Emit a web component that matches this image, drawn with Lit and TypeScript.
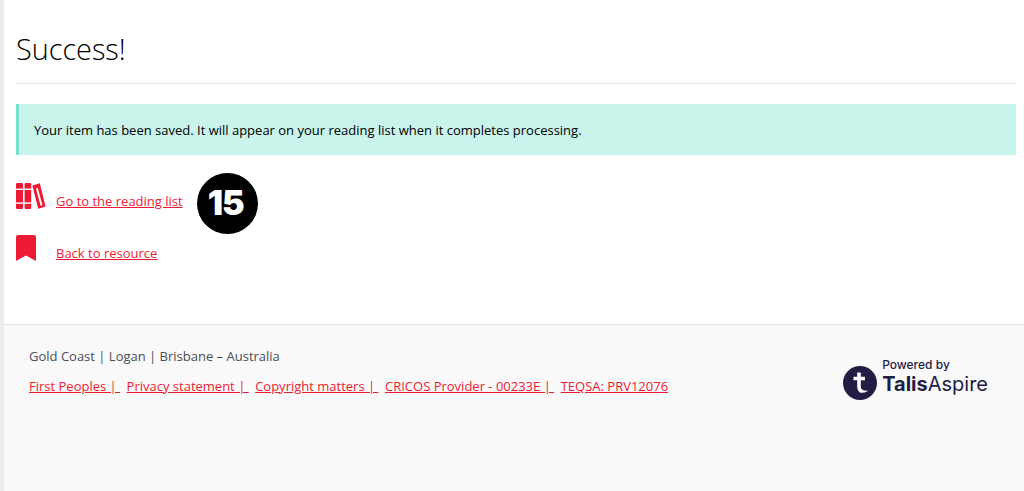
import { LitElement, html, css } from "lit";
import { customElement } from "lit/decorators.js";

@customElement("app-root")
export class AppRoot extends LitElement {
  static styles = css`
    :host {
      display: flex;
      flex-direction: column;
      height: 491px;
      width: 1024px;
      box-sizing: border-box;
      border-left: 4px solid #ececec;
      overflow: hidden;
      font-family: "Open Sans", sans-serif;
      font-size: 13px;
      color: #000;
      background: #fff;
    }
    main {
      height: 324px;
      box-sizing: border-box;
      padding: 0 8px 0 12px;
      flex: none;
    }
    h1 {
      margin: 0;
      padding-top: 30px;
      height: 53px;
      border-bottom: 1px solid #e5e5e5;
      font-size: 28.8px;
      line-height: 38px;
      font-weight: 300;
      color: #000;
    }
    .alert {
      margin-top: 20px;
      height: 51px;
      box-sizing: border-box;
      background: #c9f4eb;
      border-left: 3px solid #74e0cb;
      padding-left: 15px;
      display: flex;
      align-items: center;
      color: #000;
    }
    .row {
      display: flex;
      align-items: flex-start;
    }
    .first {
      margin-top: 18px;
      height: 61px;
    }
    .first svg {
      margin-top: 10px;
      flex: none;
    }
    .first a {
      margin-top: 19px;
      margin-left: 10px;
      line-height: 18px;
    }
    .badge {
      margin-left: 14px;
      width: 61px;
      height: 61px;
      box-sizing: border-box;
      padding: 0 3px 3px 0;
      border-radius: 50%;
      background: #000;
      color: #fff;
      display: flex;
      align-items: center;
      justify-content: center;
      font-family: Inter, sans-serif;
      font-weight: 900;
      font-size: 34px;
      letter-spacing: -1px;
    }
    .second svg {
      margin-top: 1px;
      flex: none;
    }
    .second a {
      margin-top: 10px;
      margin-left: 20px;
      line-height: 18px;
    }
    a {
      color: #ec1b33;
      text-decoration: underline;
    }
    footer {
      flex: 1;
      background: #f9f9f9;
      border-top: 1px solid #e3e3e3;
      padding: 22px 36px 0 25px;
      display: flex;
      justify-content: space-between;
      align-items: flex-start;
    }
    .place {
      color: #4a4f57;
      line-height: 18px;
    }
    .links {
      margin-top: 12px;
      display: flex;
      gap: 6.5px;
      line-height: 18px;
    }
    .links a {
      white-space: pre;
    }
    .logo {
      display: flex;
      align-items: flex-start;
      gap: 5px;
      margin-top: 11px;
      color: #211d44;
    }
    .logo svg {
      margin-top: 8px;
      flex: none;
    }
    .brand {
      display: flex;
      flex-direction: column;
    }
    .powered {
      font-family: Inter, sans-serif;
      font-size: 12px;
      font-weight: 500;
      line-height: 14px;
    }
    .name {
      font-family: Inter, sans-serif;
      font-size: 20px;
      line-height: 24px;
      font-weight: 400;
    }
    .name b {
      font-weight: 700;
    }
  `;

  render() {
    return html`
      <main>
        <h1>Success!</h1>
        <div class="alert">Your item has been saved. It will appear on your reading list when it completes processing.</div>
        <div class="row first">
          <svg width="30" height="27" viewBox="0 0 30 27" fill="#ec1b33">
            <rect x="0" y="0" width="7" height="26" rx="1.2" />
            <rect x="8.6" y="0" width="6.6" height="26" rx="1.2" />
            <rect x="0" y="5.6" width="16" height="1.4" fill="#fff" />
            <rect x="0" y="19.4" width="16" height="1.4" fill="#fff" />
            <path fill-rule="evenodd" d="M16.4 2.6 23.8 0.2 29.6 23.4 22.2 25.8ZM20 5.4 24.6 22.8 26.4 22.2 21.8 4.8Z" />
          </svg>
          <a href="#">Go to the reading list</a>
          <div class="badge">15</div>
        </div>
        <div class="row second">
          <svg width="20" height="26" viewBox="0 0 20 26" fill="#ec1b33">
            <path d="M2 0H18A2 2 0 0 1 20 2V26L10 20.5 0 26V2A2 2 0 0 1 2 0Z" />
          </svg>
          <a href="#">Back to resource</a>
        </div>
      </main>
      <footer>
        <div>
          <div class="place">Gold Coast | Logan | Brisbane – Australia</div>
          <div class="links">
            <a href="#">First Peoples | </a>
            <a href="#">Privacy statement | </a>
            <a href="#">Copyright matters | </a>
            <a href="#">CRICOS Provider - 00233E | </a>
            <a href="#">TEQSA: PRV12076</a>
          </div>
        </div>
        <div class="logo">
          <svg width="34" height="34" viewBox="0 0 34 34">
            <circle cx="17" cy="17" r="17" fill="#211d44" />
            <path d="M16 6.5V20.5Q16 24.5 19 25.5M10.5 12.5H22" fill="none" stroke="#fff" stroke-width="3.6" />
            <path d="M16 25Q21 28.5 25.5 24.5Q21 25.5 18 23Z" fill="#fff" />
          </svg>
          <div class="brand">
            <span class="powered">Powered by</span>
            <span class="name"><b>Talis</b>Aspire</span>
          </div>
        </div>
      </footer>
    `;
  }
}
